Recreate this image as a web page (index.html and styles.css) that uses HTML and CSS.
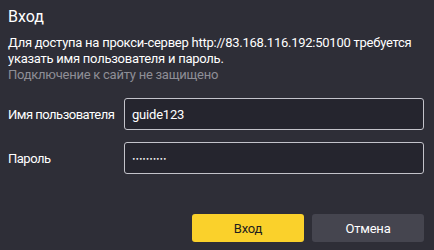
FILE: index.html
```html
<!DOCTYPE html>
<html lang="ru">
<head>
<meta charset="utf-8">
<link rel="stylesheet" href="styles.css">
</head>
<body>
<div class="dialog">
  <h1 class="title">Вход</h1>
  <p class="msg">Для доступа на прокси-сервер http://83.168.116.192:50100 требуется указать имя пользователя и пароль.</p>
  <p class="note">Подключение к сайту не защищено</p>
  <div class="form">
    <label class="label">Имя пользователя</label>
    <div class="input">guide123</div>
    <label class="label">Пароль</label>
    <div class="input"><span class="pw">••••••••••</span></div>
  </div>
  <div class="buttons">
    <button class="btn primary">Вход</button>
    <button class="btn secondary">Отмена</button>
  </div>
</div>
</body>
</html>
```
FILE: styles.css
```css
html, body {
  margin: 0;
  padding: 0;
  background: #2e2e37;
}
.dialog {
  width: 434px;
  height: 250px;
  box-sizing: border-box;
  padding: 6px 10px 8px 8px;
  font-family: Roboto, "Noto Sans", sans-serif;
  color: #fff;
  display: flex;
  flex-direction: column;
}
.title {
  margin: 0;
  font-size: 16px;
  font-weight: 400;
  line-height: 22px;
}
.msg {
  margin: 7px 0 0;
  font-size: 13px;
  line-height: 16px;
  font-weight: 400;
  letter-spacing: -0.25px;
}
.note {
  margin: 0;
  font-size: 13px;
  line-height: 15px;
  color: #8e8e96;
  letter-spacing: -0.25px;
}
.form {
  margin-top: 16px;
  display: grid;
  grid-template-columns: 116px 300px;
  row-gap: 12px;
  align-items: center;
}
.label {
  font-size: 13px;
  font-weight: 400;
  letter-spacing: -0.5px;
  white-space: nowrap;
}
.input {
  height: 32px;
  box-sizing: border-box;
  border: 1px solid #c3c3ca;
  border-radius: 3px;
  background: #25252e;
  padding: 0 7px;
  display: flex;
  align-items: center;
  font-size: 13px;
  font-weight: 400;
  letter-spacing: -0.2px;
}
.pw {
  font-family: "DejaVu Sans", sans-serif;
  font-size: 6px;
  letter-spacing: -0.1px;
}
.buttons {
  margin-top: auto;
  display: flex;
  justify-content: flex-end;
  gap: 8px;
}
.btn {
  width: 112px;
  height: 28px;
  border: none;
  border-radius: 3px;
  font-family: Roboto, "Noto Sans", sans-serif;
  font-size: 13px;
  letter-spacing: -0.2px;
}
.primary {
  background: #fad12b;
  color: #1e1e1e;
}
.secondary {
  background: #45454f;
  color: #fff;
}
```
